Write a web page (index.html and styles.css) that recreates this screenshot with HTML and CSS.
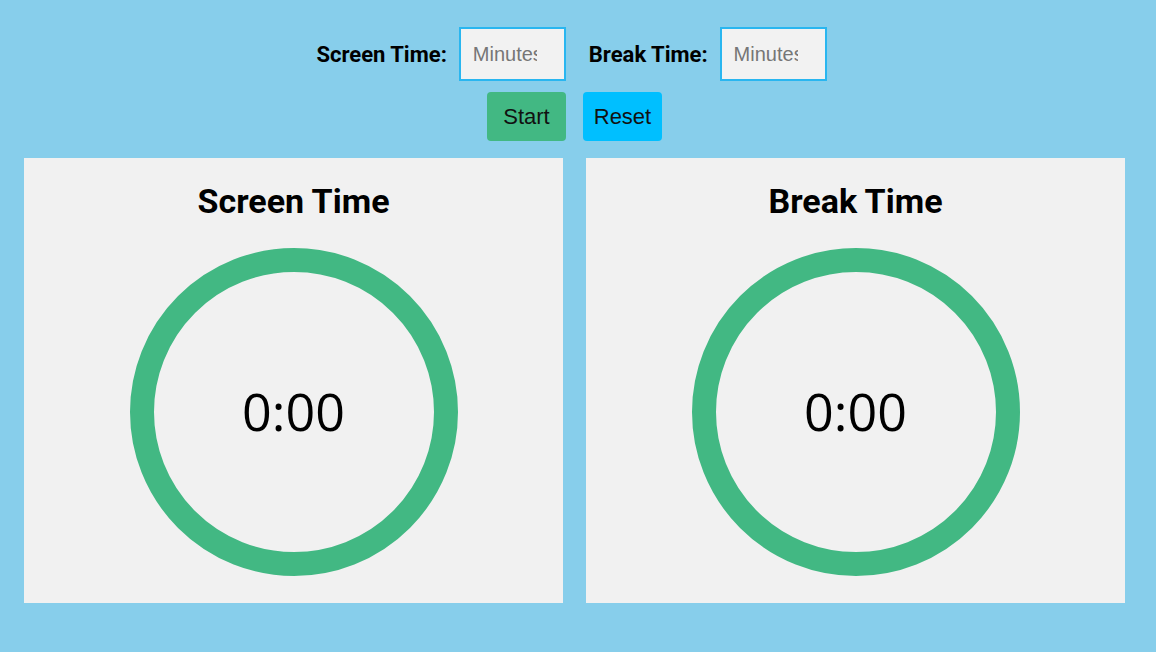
FILE: index.html
```html
<!DOCTYPE html>
<html>
<head>
<meta charset="utf-8">
<link rel="stylesheet" href="styles.css">
</head>
<body>
<div class="controls">
  <div class="inputs">
    <label class="lbl" for="st">Screen Time:</label>
    <input id="st" class="field" type="number" placeholder="Minutes">
    <label class="lbl lbl-second" for="bt">Break Time:</label>
    <input id="bt" class="field" type="number" placeholder="Minutes">
  </div>
  <div class="buttons">
    <button class="btn btn-start">Start</button>
    <button class="btn btn-reset">Reset</button>
  </div>
</div>
<div class="panels">
  <section class="panel">
    <h1 class="title">Screen Time</h1>
    <div class="ring"><span class="time">0:00</span></div>
  </section>
  <section class="panel">
    <h1 class="title">Break Time</h1>
    <div class="ring"><span class="time">0:00</span></div>
  </section>
</div>
</body>
</html>
```
FILE: styles.css
```css
* { box-sizing: border-box; }
html, body {
  margin: 0;
  padding: 0;
  background: #87ceeb;
  height: 100%;
}
body {
  font-family: Roboto, "Liberation Sans", sans-serif;
  color: #000;
}
.controls {
  display: flex;
  flex-direction: column;
  align-items: center;
  padding-top: 27px;
}
.inputs {
  display: flex;
  align-items: center;
  margin-right: 13px;
}
.lbl {
  font-weight: 700;
  font-size: 22px;
  margin-right: 12px;
}
.lbl-second { margin-left: 23px; }
.field {
  width: 107px;
  height: 54px;
  border: 2px solid #29b6f0;
  background: #f2f2f2;
  font-family: "Liberation Sans", Arial, sans-serif;
  font-size: 20px;
  padding: 0 12px;
  outline: none;
}
.field::placeholder {
  color: #767676;
  font-family: "Liberation Sans", Arial, sans-serif;
}
.buttons {
  display: flex;
  gap: 17px;
  margin-top: 11px;
  margin-right: 7px;
}
.btn {
  width: 79px;
  height: 49px;
  border: none;
  border-radius: 4px;
  font-family: "Liberation Sans", Arial, sans-serif;
  font-size: 22px;
  color: #111;
  padding: 0;
}
.btn-start { background: #42b883; }
.btn-reset { background: #00bfff; }
.panels {
  display: flex;
  gap: 23px;
  padding: 0 31px 0 24px;
  margin-top: 17px;
}
.panel {
  flex: 1;
  height: 445px;
  background: #f1f1f1;
  display: flex;
  flex-direction: column;
  align-items: center;
}
.title {
  font-size: 34px;
  font-weight: 700;
  margin: 23px 0 0;
  line-height: 40px;
}
.ring {
  margin-top: 27px;
  width: 328px;
  height: 328px;
  border-radius: 50%;
  border: 24px solid #42b883;
  display: flex;
  align-items: center;
  justify-content: center;
}
.time {
  font-family: "Open Sans", sans-serif;
  font-size: 52px;
  font-weight: 400;
  margin-top: -3px;
}
```
